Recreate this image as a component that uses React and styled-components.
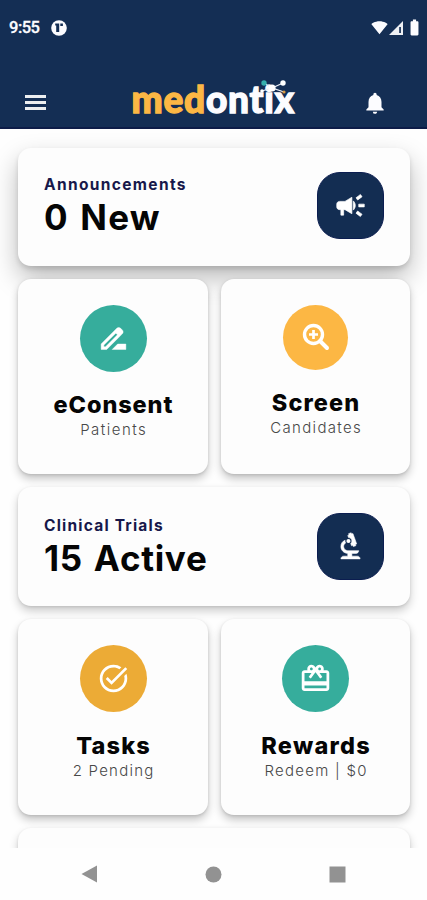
import React from "react";
import styled, { createGlobalStyle, css } from "styled-components";
import {
  MdCampaign, MdDriveFileRenameOutline, MdBiotech, MdTaskAlt,
  MdCardGiftcard, MdNotifications, MdSignalWifi4Bar, MdBatteryFull,
} from "react-icons/md";

const NAVY = "#142e54";
const TEAL = "#36ad9c";

const GlobalStyle = createGlobalStyle`
  * { box-sizing: border-box; }
  body { margin: 0; background: #fefefe; overflow: hidden; }
`;

const Screen = styled.div`
  width: 427px;
  height: 900px;
  display: flex;
  flex-direction: column;
  overflow: hidden;
  background: #fefefe;
  font-family: Inter, "Open Sans", sans-serif;
  color: #050505;
`;

const Header = styled.header`
  flex: none;
  height: 129px;
  background: ${NAVY};
  border-bottom: 2px solid #0d1c48;
  color: #fcfcff;
`;

const StatusBar = styled.div`
  height: 55px;
  padding: 0 3px 0 9px;
  display: flex;
  align-items: center;
`;

const Clock = styled.span`
  width: 42px;
  font: 500 16.5px/20px Roboto, sans-serif;
  letter-spacing: -0.5px;
  -webkit-text-stroke: 0.3px;
`;

const StatusIcons = styled.div`
  margin-left: auto;
  display: flex;
  align-items: center;
  svg { display: block; }
`;

const AppBar = styled.div`
  height: 72px;
  padding: 20px 39px 0 25px;
  display: flex;
  align-items: flex-start;
  justify-content: space-between;
`;

const MenuButton = styled.button`
  width: 21px;
  height: 15px;
  margin-top: 20px;
  padding: 0;
  border: 0;
  background: none;
  display: flex;
  flex-direction: column;
  justify-content: space-between;
`;

const MenuLine = styled.span`
  height: 3px;
  background: #eceef0;
`;

const BellButton = styled.button`
  width: 26px;
  height: 26px;
  margin-top: 15px;
  padding: 0;
  border: 0;
  background: none;
  color: #fcfcff;
  svg { display: block; }
`;

const Brand = styled.div`
  position: relative;
  width: 166px;
  margin-top: 1px;
  margin-left: 21px;
  height: 46px;
  font: 900 37px/46px Lato, sans-serif;
  letter-spacing: 0.75px;
  -webkit-text-stroke: 1.3px;
  white-space: nowrap;
`;

const BrandAccent = styled.span`
  color: #fcb744;
`;

const Molecule = styled.svg`
  position: absolute;
  left: 126px;
  top: 3px;
`;

const Main = styled.main`
  flex: none;
  height: 719px;
  padding: 19px 17px 0 18px;
  display: grid;
  grid-template-columns: 190px 189px;
  grid-template-rows: 117.5px 195.5px 119px 196px 118px;
  gap: 13px;
  overflow: hidden;
`;

const Card = styled.section`
  border-radius: 13px;
  background: #fdfdfd;
  display: flex;
`;

const WideCard = styled(Card)`
  grid-column: 1 / -1;
  align-items: center;
  justify-content: space-between;
  padding: 0 26px;
  box-shadow: ${(p) => (p.$deep
    ? "0 12px 26px rgba(0,0,0,.27), 0 3px 5px rgba(0,0,0,.12)"
    : "0 5px 10px rgba(0,0,0,.2), 0 1px 3px rgba(0,0,0,.1)")};
`;

const TileCard = styled(Card)`
  flex-direction: column;
  align-items: center;
  padding-top: 26px;
  box-shadow: 0 5px 9px rgba(0,0,0,.22), 0 1px 3px rgba(0,0,0,.12);
`;

const Summary = styled.div`
  height: ${(p) => p.$height}px;
`;

const Label = styled.div`
  font-size: 15.5px;
  line-height: 22px;
  font-weight: 650;
  color: #17184a;
  letter-spacing: ${(p) => p.$spacing}px;
  white-space: nowrap;
`;

const Value = styled.div`
  font-size: 35px;
  line-height: 42px;
  font-weight: 700;
  letter-spacing: ${(p) => p.$spacing}px;
  word-spacing: 2px;
  white-space: nowrap;
`;

const Badge = styled.div`
  flex: none;
  color: #fff;
  display: grid;
  place-items: center;
  ${(p) => p.$stroke && css`
    path:not([fill="none"]) {
      stroke: currentColor;
      stroke-width: ${p.$stroke};
    }
  `}
`;

const SquareBadge = styled(Badge)`
  width: 67px;
  height: 67px;
  margin-bottom: ${(p) => p.$lift}px;
  border-radius: 23px;
  border: 1px solid #0b1d50;
  background: #132d52;
`;

const RoundBadge = styled(Badge)`
  width: ${(p) => p.$size}px;
  height: ${(p) => p.$size}px;
  border-radius: 50%;
  background: ${(p) => p.$color};
`;

const TileTitle = styled.div`
  margin-top: 18.5px;
  font-size: 23.5px;
  line-height: 30px;
  font-weight: 800;
  letter-spacing: ${(p) => p.$spacing}px;
  margin-right: ${(p) => -p.$spacing}px;
  white-space: nowrap;
`;

const TileNote = styled.div`
  font-size: 15px;
  line-height: 20px;
  font-weight: 300;
  color: #484848;
  letter-spacing: ${(p) => p.$spacing}px;
  margin-right: ${(p) => -p.$spacing}px;
  white-space: nowrap;
`;

const NavBar = styled.nav`
  flex: none;
  height: 52px;
  padding: 0 81px 0 81px;
  display: flex;
  align-items: center;
  justify-content: space-between;
  background: #fefefe;
  svg { display: block; }
`;

function SearchPlusIcon() {
  return (
    <svg width="28" height="28" viewBox="0 0 28 28" fill="none" stroke="#fff">
      <circle cx="11.5" cy="11.5" r="9" strokeWidth="3.4" />
      <path d="M11.5 7v9M7 11.5h9" strokeWidth="2.7" />
      <path d="M18 18l7 7" strokeWidth="4" strokeLinecap="round" />
    </svg>
  );
}

function Tile({ icon, color, size = 67, stroke, title, titleSpacing, note, noteSpacing }) {
  return (
    <TileCard>
      <RoundBadge $color={color} $size={size} $stroke={stroke}>{icon}</RoundBadge>
      <TileTitle $spacing={titleSpacing}>{title}</TileTitle>
      <TileNote $spacing={noteSpacing}>{note}</TileNote>
    </TileCard>
  );
}

export default function App() {
  return (
    <>
      <GlobalStyle />
      <Screen>
        <Header>
          <StatusBar>
            <Clock>9:55</Clock>
            <svg width="16" height="16" viewBox="0 0 16 16">
              <circle cx="8" cy="8" r="7.8" fill="#fcfcff" />
              <path d="M4.2 3.5h4v8.5H5.2V5.5h-1zM9.3 3.5h2.6v2.6H9.3z" fill={NAVY} />
            </svg>
            <StatusIcons>
              <MdSignalWifi4Bar size={17} />
              <svg width="17" height="18" viewBox="0 0 17 18">
                <path d="M1 16L15 2v14z" fill="#eef0f4" />
                <path d="M11.2 8h1.7v6h-1.7z" fill={NAVY} />
              </svg>
              <MdBatteryFull size={19} />
            </StatusIcons>
          </StatusBar>
          <AppBar>
            <MenuButton aria-label="Menu"><MenuLine /><MenuLine /><MenuLine /></MenuButton>
            <Brand>
              <BrandAccent>med</BrandAccent>ontix
              <Molecule width="32" height="18" viewBox="0 0 32 18">
                <path d="M6 4l8 5 11-5M4 12l10-3 12 4" fill="none" stroke="#e8edf5" strokeWidth="1.2" />
                <circle cx="6" cy="4" r="2.7" fill="#35afae" />
                <circle cx="14" cy="9" r="3.6" fill="#fff" />
                <circle cx="25" cy="4" r="2.7" fill="#fff" />
                <circle cx="4" cy="12" r="1.8" fill="#fff" />
                <circle cx="26" cy="13" r="1.6" fill="#d99a43" />
              </Molecule>
            </Brand>
            <BellButton aria-label="Notifications"><MdNotifications size={26} /></BellButton>
          </AppBar>
        </Header>
        <Main>
          <WideCard $deep>
            <Summary $height={65}>
              <Label $spacing={1.35}>Announcements</Label>
              <Value $spacing={1.2}>0 New</Value>
            </Summary>
            <SquareBadge $stroke={0.5} $lift={2.5}><MdCampaign size={33} /></SquareBadge>
          </WideCard>
          <Tile icon={<MdDriveFileRenameOutline size={33} />} color={TEAL} stroke={0.3}
            title="eConsent" titleSpacing={0.9} note="Patients" noteSpacing={1.5} />
          <Tile icon={<SearchPlusIcon />} color="#fcb744" size={65}
            title="Screen" titleSpacing={1.1} note="Candidates" noteSpacing={1.3} />
          <WideCard>
            <Summary $height={63.5}>
              <Label $spacing={1.2}>Clinical Trials</Label>
              <Value $spacing={0.7}>15 Active</Value>
            </Summary>
            <SquareBadge $stroke={0.4} $lift={0.8}><MdBiotech size={33} /></SquareBadge>
          </WideCard>
          <Tile icon={<MdTaskAlt size={33} />} color="#ecab36"
            title="Tasks" titleSpacing={1.2} note="2 Pending" noteSpacing={1.25} />
          <Tile icon={<MdCardGiftcard size={33} />} color={TEAL}
            title="Rewards" titleSpacing={1.3} note="Redeem | $0" noteSpacing={1.25} />
          <WideCard />
        </Main>
        <NavBar>
          <svg width="17" height="18" viewBox="0 0 17 18"><path d="M0.5 9L16 .5v17z" fill="#929292" /></svg>
          <svg width="17" height="17" viewBox="0 0 17 17"><circle cx="8.5" cy="8.5" r="8" fill="#929292" /></svg>
          <svg width="17" height="17" viewBox="0 0 17 17"><path d="M.5.5h16v16H.5z" fill="#929292" /></svg>
        </NavBar>
      </Screen>
    </>
  );
}
